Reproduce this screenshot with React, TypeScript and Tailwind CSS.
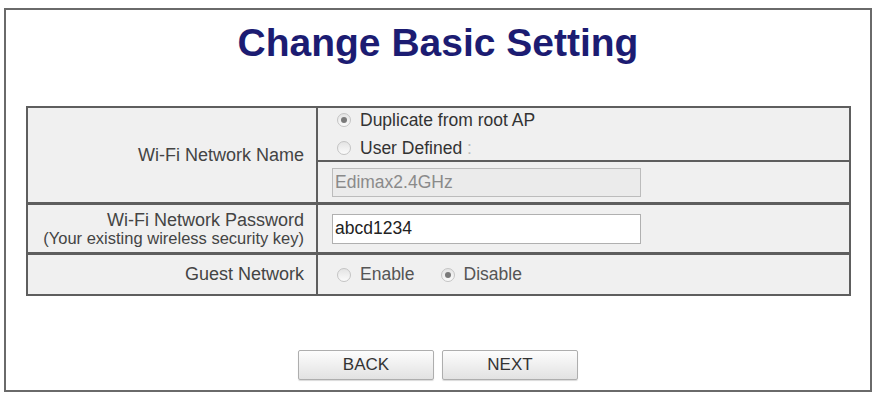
import React from 'react';

const font = { fontFamily: '"Liberation Sans", Arial, Helvetica, sans-serif' };

function Radio({ checked, label, muted }: { checked?: boolean; label: React.ReactNode; muted?: boolean }) {
  return (
    <label className="flex items-center gap-[9px]">
      <span className="relative flex h-[14px] w-[14px] items-center justify-center rounded-full border border-[#c4c4c4] bg-gradient-to-b from-[#e4e4e4] to-[#fbfbfb]">
        {checked && <span className="h-[6px] w-[6px] rounded-full bg-[#7a7a7a]" />}
      </span>
      <span className={muted ? 'text-[#555]' : 'text-[#333]'}>{label}</span>
    </label>
  );
}

export default function App() {
  return (
    <div className="h-[395px] w-[876px] bg-white px-[4px] pt-[8px]" style={font}>
      <div className="flex h-[384px] flex-col border-2 border-[#6a6a6a]">
        {/* Title */}
        <h1 className="mt-[14px] text-center text-[39px] font-bold leading-[37px] text-[#1c1c72]">
          Change Basic Setting
        </h1>

        {/* Settings table */}
        <div className="ml-[20px] mt-[45px] w-[825px] border-2 border-[#5e5e5e] bg-[#f0f0f0] text-[17.5px]">
          {/* Wi-Fi Network Name */}
          <div className="flex h-[97px] border-b-[3px] border-[#5e5e5e]">
            <div className="flex w-[290px] items-center justify-end border-r-2 border-[#5e5e5e] pr-[12px] text-[18px] text-[#444]">
              Wi-Fi Network Name
            </div>
            <div className="flex flex-1 flex-col">
              <div className="flex h-[54px] flex-col justify-center gap-[4px] border-b-2 border-[#5e5e5e] pl-[19px]">
                <div className="flex h-[24px] items-center">
                  <Radio checked label="Duplicate from root AP" />
                </div>
                <div className="flex h-[24px] items-center">
                  <Radio
                    label={
                      <>
                        User Defined <span className="text-[#bbb]">:</span>
                      </>
                    }
                  />
                </div>
              </div>
              <div className="flex flex-1 items-center pl-[14px]">
                <div className="flex h-[29px] w-[309px] items-center border border-[#bcbcbc] bg-[#ebebeb] px-[2px] text-[#8a8a8a]">
                  Edimax2.4GHz
                </div>
              </div>
            </div>
          </div>

          {/* Wi-Fi Network Password */}
          <div className="flex h-[50px] border-b-[3px] border-[#5e5e5e]">
            <div className="flex w-[290px] flex-col items-end justify-center border-r-2 border-[#5e5e5e] pr-[12px] text-[#444]">
              <span className="text-[18px] leading-[18px]">Wi-Fi Network Password</span>
              <span className="text-[16.5px] leading-[18px]">(Your existing wireless security key)</span>
            </div>
            <div className="flex flex-1 items-center pl-[14px]">
              <div className="flex h-[30px] w-[309px] items-center border border-[#b0b0b0] bg-white px-[2px] text-[#222]">
                abcd1234
              </div>
            </div>
          </div>

          {/* Guest Network */}
          <div className="flex h-[39px]">
            <div className="flex w-[290px] items-center justify-end border-r-2 border-[#5e5e5e] pr-[12px] text-[18px] text-[#444]">
              Guest Network
            </div>
            <div className="flex flex-1 items-center gap-[26px] pl-[19px]">
              <Radio muted label="Enable" />
              <Radio checked muted label="Disable" />
            </div>
          </div>
        </div>

        {/* Buttons */}
        <div className="mt-auto mb-[10px] flex justify-center gap-[8px]">
          <button className="h-[30px] w-[136px] rounded-[2px] border border-[#aeaeae] bg-gradient-to-b from-[#fdfdfd] to-[#e2e2e2] text-[17px] text-[#333] shadow-[0_1px_1px_rgba(0,0,0,0.15)]">
            BACK
          </button>
          <button className="h-[30px] w-[136px] rounded-[2px] border border-[#aeaeae] bg-gradient-to-b from-[#fdfdfd] to-[#e2e2e2] text-[17px] text-[#333] shadow-[0_1px_1px_rgba(0,0,0,0.15)]">
            NEXT
          </button>
        </div>
      </div>
    </div>
  );
}
